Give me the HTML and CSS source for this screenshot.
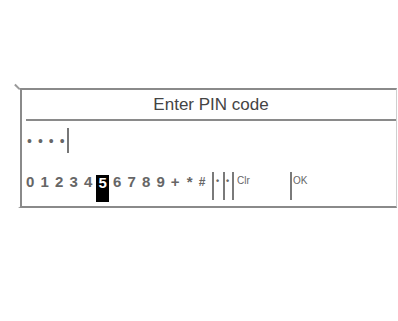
FILE: index.html
```html
<!DOCTYPE html>
<html lang="en">
<head>
    <meta charset="UTF-8">
    <meta name="viewport" content="width=device-width, initial-scale=1.0">
    <title>Enter PIN code</title>
    <link rel="stylesheet" href="styles.css">
</head>
<body>
    <div class="panel">
        <div class="title">Enter PIN code</div>

        <!-- masked entry with cursor -->
        <div class="entry">
            <span class="mask">••••</span>
            <span class="cursor"></span>
        </div>

        <!-- speller row -->
        <div class="keys">
            <span class="key">0</span>
            <span class="key">1</span>
            <span class="key">2</span>
            <span class="key">3</span>
            <span class="key">4</span>
            <span class="key key-active">5</span>
            <span class="key">6</span>
            <span class="key">7</span>
            <span class="key">8</span>
            <span class="key">9</span>
            <span class="key">+</span>
            <span class="key">*</span>
            <span class="key key-hash">#</span>
            <span class="fn fn-left">•</span>
            <span class="fn fn-right">•</span>
            <span class="fn fn-clr">Clr</span>
            <span class="fn fn-ok">OK</span>
        </div>
    </div>
</body>
</html>
```

FILE: styles.css
```css
body {
    margin: 0;
    padding: 0;
    background: #fff;
    font-family: "Liberation Sans", Arial, sans-serif;
    color: #4a4a4a;
}
.panel {
    position: relative;
    width: 374px;
    margin: 88px 0 0 20px;
    border: 2px solid #8a8a8a;
    border-right: 1px solid #cfcfcf;
}
.panel::before,
.panel::after {
    content: "";
    position: absolute;
    left: -8px;
    width: 7px;
    height: 1.5px;
    background: #9a9a9a;
}
.panel::before {
    top: -4px;
    transform: rotate(45deg);
}
.panel::after {
    bottom: -4px;
    transform: rotate(-45deg);
}
.title {
    margin-left: 4px;
    height: 29px;
    line-height: 29px;
    border-bottom: 2px solid #8a8a8a;
    text-align: center;
    font-size: 17px;
    color: #444;
}
.entry {
    display: flex;
    align-items: center;
    height: 39px;
    padding-left: 5px;
}
.mask {
    font-size: 14px;
    letter-spacing: 6px;
    color: #666;
    line-height: 14px;
}
.cursor {
    width: 2px;
    height: 25px;
    margin-left: -4px;
    background: #777;
}
.keys {
    display: flex;
    align-items: flex-start;
    height: 46px;
    padding: 12px 0 0 1px;
    box-sizing: border-box;
}
.key {
    width: 14.5px;
    text-align: center;
    font-size: 15px;
    font-weight: bold;
    line-height: 20px;
    color: #666;
}
.key-active {
    width: 13px;
    margin: 3px 0.75px 0;
    height: 27px;
    line-height: 15px;
    background: #000;
    color: #fff;
}
.key-hash {
    width: 10px;
    font-size: 12px;
}
.fn {
    height: 28px;
    border-left: 2px solid #7a7a7a;
    font-size: 10px;
    line-height: 12px;
    padding-top: 3px;
    box-sizing: border-box;
    color: #666;
}
.fn-left {
    margin-left: 5px;
    width: 11px;
    padding-left: 2px;
    font-size: 9px;
    font-weight: bold;
}
.fn-right {
    width: 9px;
    padding-left: 1px;
    font-size: 9px;
    font-weight: bold;
}
.fn-clr {
    width: 58px;
    padding-left: 3px;
}
.fn-ok {
    padding-left: 1px;
    color: #666;
}
```
